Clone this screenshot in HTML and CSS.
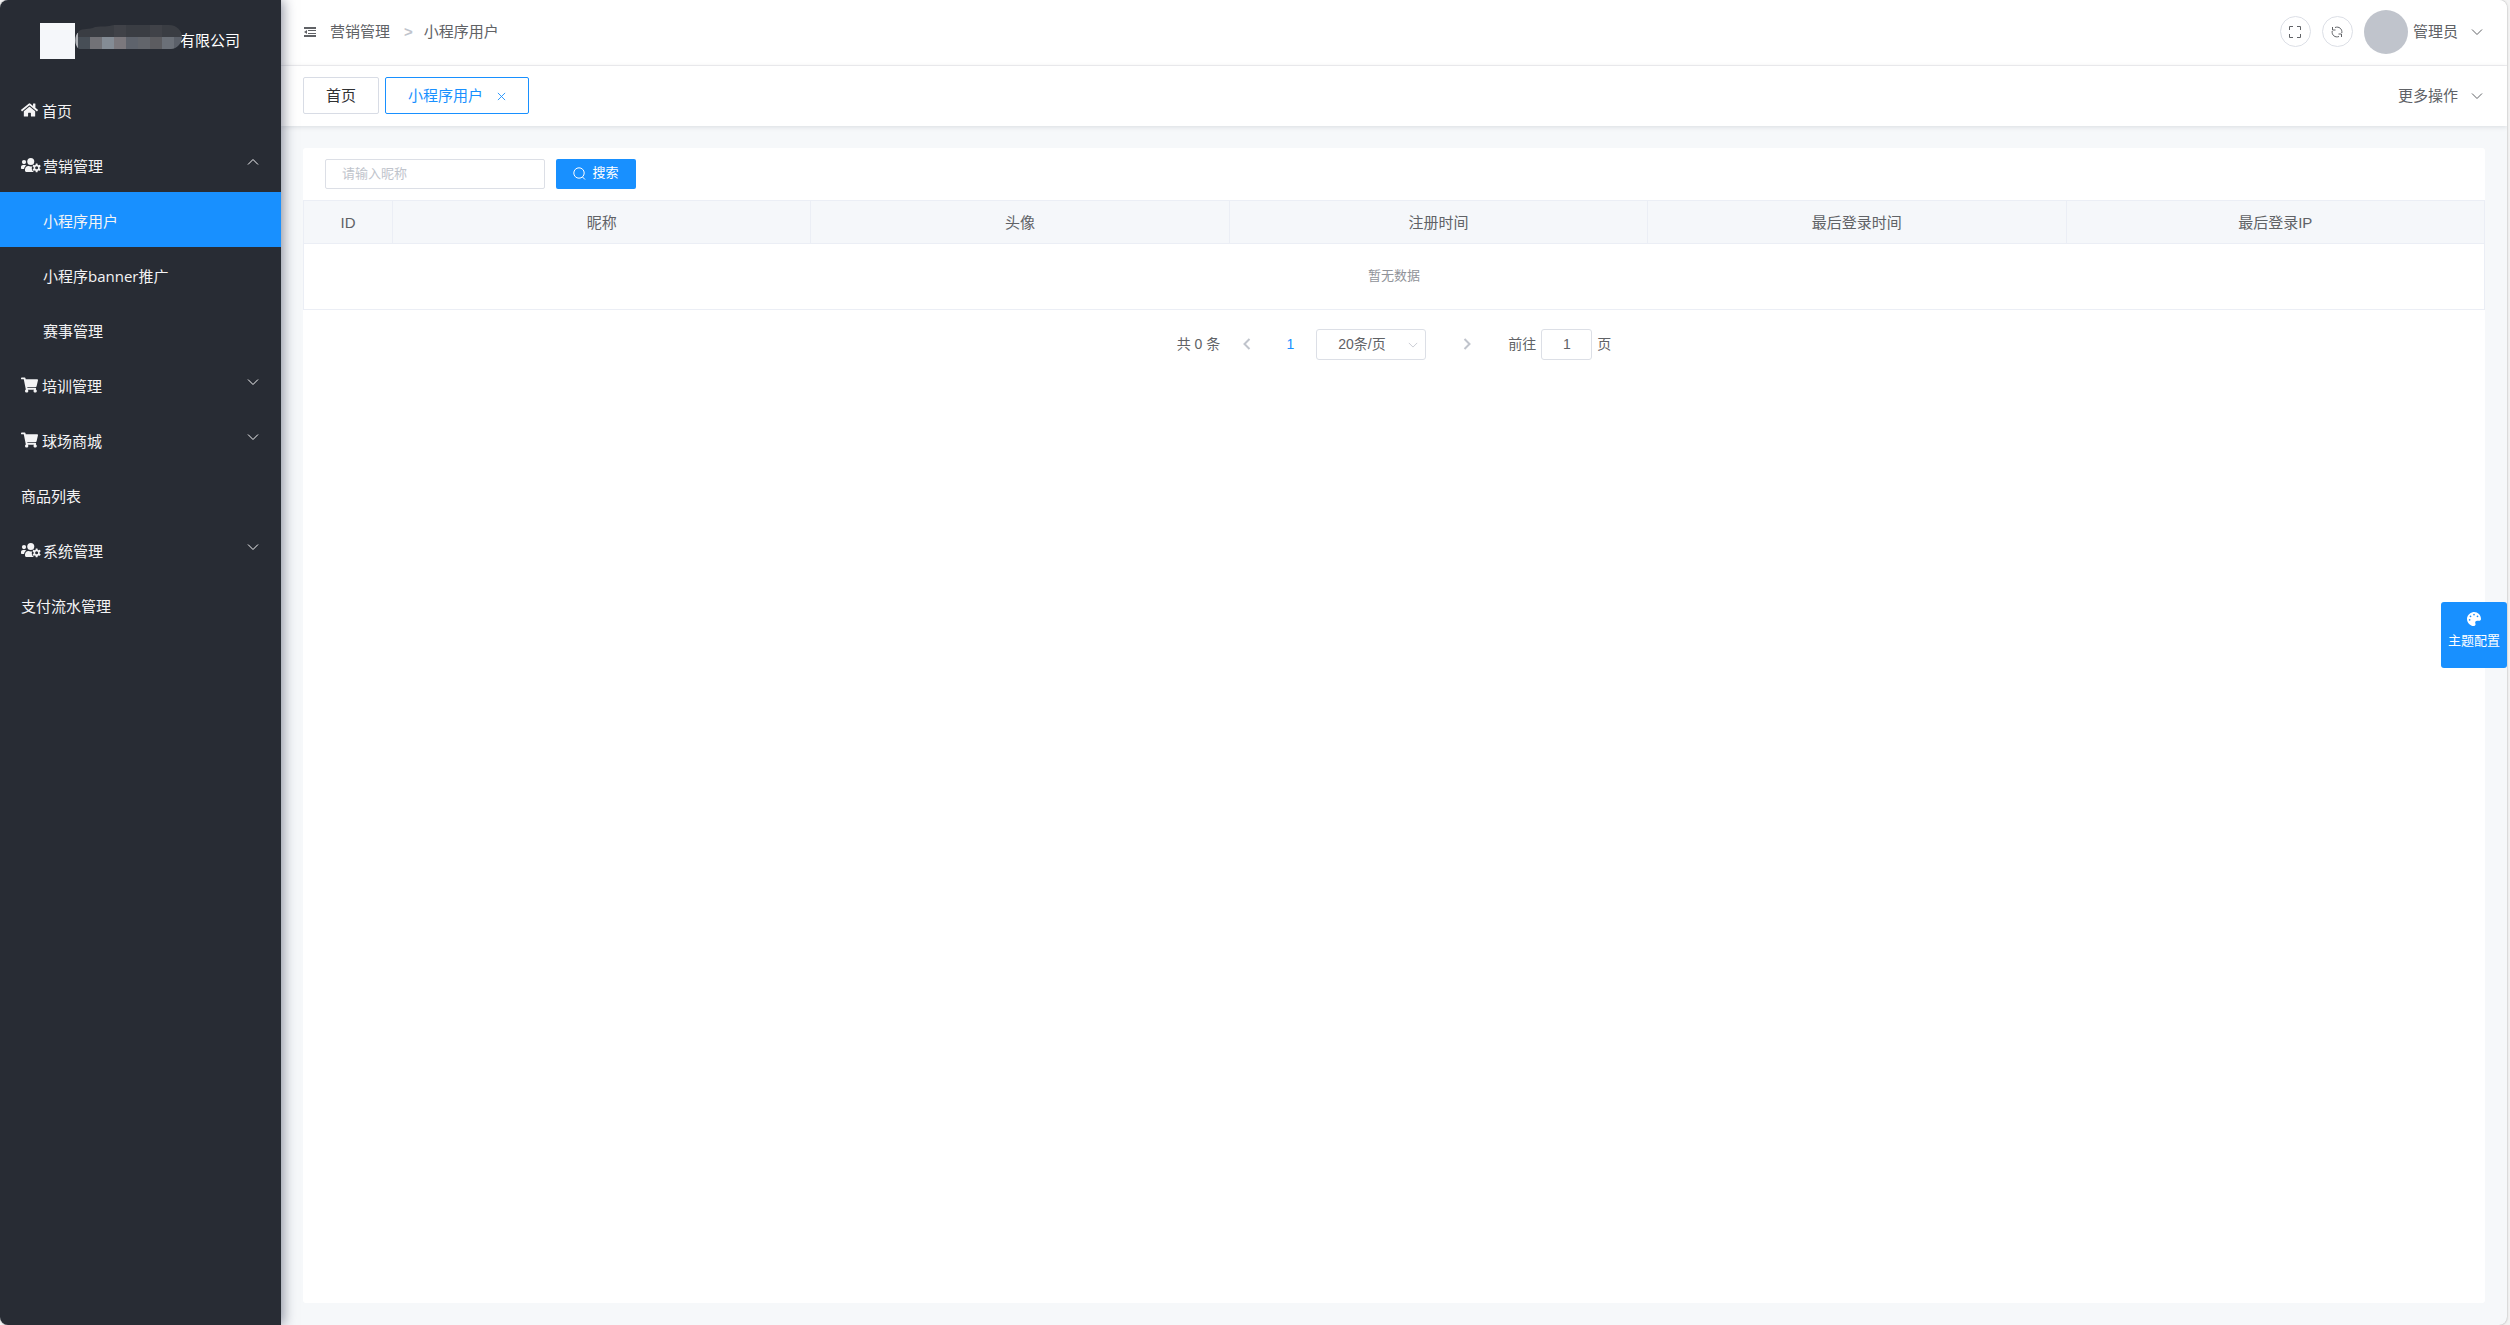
FILE: index.html
```html
<!DOCTYPE html>
<html lang="zh-CN">
<head>
<meta charset="utf-8">
<title>小程序用户</title>
<link rel="stylesheet" href="styles.css">
</head>
<body>
<svg class="sprite" aria-hidden="true">
  <symbol id="home" viewBox="0 0 576 512"><path d="M280.37 148.26L96 300.11V464a16 16 0 0 0 16 16l112.06-.29a16 16 0 0 0 15.92-16V368a16 16 0 0 1 16-16h64a16 16 0 0 1 16 16v95.64a16 16 0 0 0 16 16.05L464 480a16 16 0 0 0 16-16V300L295.67 148.26a12.19 12.19 0 0 0-15.3 0zM571.6 251.47L488 182.56V44.05a12 12 0 0 0-12-12h-56a12 12 0 0 0-12 12v72.61L318.47 43a48 48 0 0 0-61 0L4.34 251.47a12 12 0 0 0-1.6 16.9l25.5 31A12 12 0 0 0 45.15 301l235.22-193.74a12.19 12.19 0 0 1 15.3 0L530.9 301a12 12 0 0 0 16.9-1.6l25.5-31a12 12 0 0 0-1.7-16.93z"/></symbol>
  <symbol id="cart" viewBox="0 0 576 512"><path d="M528.12 301.319l47.273-208C578.806 78.301 567.391 64 551.99 64H159.208l-9.166-44.81C147.758 8.021 137.93 0 126.529 0H24C10.745 0 0 10.745 0 24v16c0 13.255 10.745 24 24 24h69.883l70.248 343.435C147.325 417.1 136 435.222 136 456c0 30.928 25.072 56 56 56s56-25.072 56-56c0-15.674-6.447-29.835-16.824-40h209.647C430.447 426.165 424 440.326 424 456c0 30.928 25.072 56 56 56s56-25.072 56-56c0-22.172-12.888-41.332-31.579-50.405l5.517-24.276c3.413-15.018-8.002-29.319-23.403-29.319H218.117l-6.545-32h293.145c11.206 0 20.92-7.754 23.403-18.681z"/></symbol>
  <symbol id="users" viewBox="0 0 640 512">
    <circle cx="96" cy="160" r="68"/><circle cx="312" cy="144" r="112"/>
    <path d="M64 256h64c18 0 34 7 45 19-40 22-68 61-74 109H32c-18 0-32-14-32-32v-32c0-35 29-64 64-64z"/>
    <path d="M235 288h9c40 18 88 20 118 4-18 30-22 62-16 92 6 38 30 70 64 92-6 3-12 4-18 4H176c-26 0-48-21-48-48v-29c0-64 48-115 107-115z"/>
    <path fill-rule="evenodd" d="M474 206h52l12 46 20 12 46-13 26 44-34 33v36l34 33-26 44-46-13-20 12-12 46h-52l-12-46-20-12-46 13-26-44 34-33v-36l-34-33 26-44 46 13 20-12zM500 298a48 48 0 1 0 0 96a48 48 0 0 0 0-96z"/>
  </symbol>
  <symbol id="palette" viewBox="0 0 512 512"><path d="M204.3 5C104.9 24.4 24.8 104.3 5.2 203.4c-37 187 131.7 326.4 258.8 306.7 41.2-6.4 61.4-54.6 42.5-91.7-23.1-45.4 9.9-98.4 60.9-98.4h79.7c35.8 0 64.8-29.6 64.9-65.3C511.5 97.1 368.1-26.9 204.3 5zM96 320c-17.7 0-32-14.3-32-32s14.3-32 32-32 32 14.3 32 32-14.3 32-32 32zm32-128c-17.7 0-32-14.3-32-32s14.3-32 32-32 32 14.3 32 32-14.3 32-32 32zm128-64c-17.7 0-32-14.3-32-32s14.3-32 32-32 32 14.3 32 32-14.3 32-32 32zm128 64c-17.7 0-32-14.3-32-32s14.3-32 32-32 32 14.3 32 32-14.3 32-32 32z"/></symbol>
  <symbol id="down" viewBox="0 0 12 12"><path class="line" d="M1 3.5l5 5 5-5"/></symbol>
  <symbol id="up" viewBox="0 0 12 12"><path class="line" d="M1 8.5l5-5 5 5"/></symbol>
  <symbol id="left" viewBox="0 0 12 12"><path class="bold" d="M8.500 1L3.500 6l5 5"/></symbol>
  <symbol id="right" viewBox="0 0 12 12"><path class="bold" d="M3.500 1l5 5-5 5"/></symbol>
</svg>
<div class="app">
  <aside class="sidebar">
    <div class="brand">
      <span class="logo"></span>
      <svg class="mosaic" width="107" height="24" viewBox="0 0 107 24" aria-hidden="true">
        <clipPath id="blob"><path d="M4 24C-1 20-1 11 4 6C8 3 14 5 20 2C28 1 32 2 39 0H94C102 0 107 6 107 12S102 24 96 24z"/></clipPath>
        <g clip-path="url(#blob)">
          <path fill="#3a3d43" d="M0 0h107v12H0z"/><path fill="#404248" d="M39 0h12v12H39zM75 0h12v12H75z"/>
          <path fill="#aeb1b6" d="M0 8h3v16H0z"/><path fill="#474e56" d="M3 12h12v12H3z"/><path fill="#727277" d="M15 12h12v12H15z"/><path fill="#848c95" d="M27 12h12v12H27z"/><path fill="#7b787d" d="M39 12h12v12H39z"/><path fill="#5e636c" d="M51 12h12v12H51z"/><path fill="#62656b" d="M63 12h12v12H63z"/><path fill="#5c5c60" d="M75 12h12v12H75z"/><path fill="#6b7078" d="M87 12h12v12H87z"/><path fill="#5b6069" d="M99 12h8v12H99z"/>
        </g>
      </svg>
      <span class="company">有限公司</span>
    </div>
    <nav class="menu">
      <a href="#"><svg class="ic-menu"><use href="#home"/></svg>首页</a>
      <a href="#"><svg class="ic-users"><use href="#users"/></svg>营销管理<svg class="arrow"><use href="#up"/></svg></a>
      <a class="sub active" href="#">小程序用户</a>
      <a class="sub" href="#">小程序banner推广</a>
      <a class="sub" href="#">赛事管理</a>
      <a href="#"><svg class="ic-menu"><use href="#cart"/></svg>培训管理<svg class="arrow"><use href="#down"/></svg></a>
      <a href="#"><svg class="ic-menu"><use href="#cart"/></svg>球场商城<svg class="arrow"><use href="#down"/></svg></a>
      <a href="#">商品列表</a>
      <a href="#"><svg class="ic-users"><use href="#users"/></svg>系统管理<svg class="arrow"><use href="#down"/></svg></a>
      <a href="#">支付流水管理</a>
    </nav>
  </aside>
  <div class="page">
    <header class="topbar">
      <button class="fold" aria-label="折叠菜单"><svg width="12" height="12" viewBox="0 0 12 12"><path d="M0 1h12v2H0zM4 4h8v1H4zM4 7h8v1H4zM0 9h12v2H0zM0 6l3-2v4z"/></svg></button>
      <nav class="crumbs"><a href="#">营销管理</a><span class="sep">&gt;</span><a href="#">小程序用户</a></nav>
      <div class="tools">
        <button class="round" aria-label="全屏"><svg width="12" height="12" viewBox="0 0 12 12"><path class="line" d="M.5 4V.5H4M8 .5h3.500V4M11.500 8v3.500H8M4 11.500H.5V8"/></svg></button>
        <button class="round" aria-label="刷新"><svg width="12" height="12" viewBox="0 0 12 12"><path class="line" d="M1.500 1v3h3M4 1.500C8 0 11.500 3 10.800 7M10.500 11V8h-3M8 10.500C4 12 .5 9 1.200 5"/></svg></button>
        <button class="user"><span class="avatar"></span>管理员<svg class="caret"><use href="#down"/></svg></button>
      </div>
    </header>
    <div class="tabs">
      <a class="tab" href="#">首页</a>
      <a class="tab current" href="#">小程序用户<svg width="9" height="9" viewBox="0 0 10 10"><path class="line" d="M1 1l8 8M9 1L1 9"/></svg></a>
      <button class="more">更多操作<svg class="caret"><use href="#down"/></svg></button>
    </div>
    <main class="content">
      <section class="card">
        <form class="search">
          <input type="text" placeholder="请输入昵称" aria-label="昵称">
          <button type="button"><svg width="13" height="13" viewBox="0 0 13 13"><circle class="line" cx="6" cy="6" r="5.200"/><path class="line" d="M9.500 10l2.500 2.500"/></svg>搜索</button>
        </form>
        <table>
          <colgroup><col class="col-id"><col><col><col><col><col></colgroup>
          <thead><tr><th>ID</th><th>昵称</th><th>头像</th><th>注册时间</th><th>最后登录时间</th><th>最后登录IP</th></tr></thead>
          <tbody><tr><td colspan="6">暂无数据</td></tr></tbody>
        </table>
        <div class="pager">
          <span>共 0 条</span>
          <button class="step" aria-label="上一页" disabled><svg><use href="#left"/></svg></button>
          <a class="num" href="#">1</a>
          <span class="sizes"><select aria-label="每页条数"><option>20条/页</option></select><svg><use href="#down"/></svg></span>
          <button class="step next" aria-label="下一页" disabled><svg><use href="#right"/></svg></button>
          <label class="jump">前往<input type="text" value="1">页</label>
        </div>
      </section>
    </main>
  </div>
  <button class="theme"><svg width="14" height="14"><use href="#palette"/></svg>主题配置</button>
</div>
</body>
</html>
```
FILE: styles.css
```css
* { box-sizing: border-box; }
html, body { height: 100%; }
body {
  margin: 0;
  padding-right: 3px;
  background: #f3f3f3;
  color: #606266;
  font: 15px/20px "Liberation Sans", "Noto Sans CJK SC", sans-serif;
}
a { color: inherit; text-decoration: none; }
button, input, select { font: inherit; color: inherit; }
button { padding: 0; border: 0; background: none; cursor: pointer; }
svg { fill: currentColor; flex: none; }
.sprite { position: absolute; width: 0; height: 0; }
.line { fill: none; stroke: currentColor; stroke-width: 1; }
.bold { fill: none; stroke: currentColor; stroke-width: 2; }

.app {
  position: relative;
  display: flex;
  min-height: 100%;
  overflow: hidden;
  border-radius: 8px;
  background: #f6f8fa;
  box-shadow: 0 0 2px #999;
}

.sidebar {
  position: relative;
  z-index: 1;
  flex: none;
  width: 281px;
  background: #282c34;
  color: #f4f4f5;
  box-shadow: 2px 0 12px rgba(29, 35, 65, .5);
}
.brand { display: flex; align-items: center; height: 82px; padding-left: 40px; color: #fff; }
.logo { width: 35px; height: 36px; background: #f5f7fa; }
.mosaic { position: relative; margin-top: -8px; }
.company { margin-left: -2px; }
.menu a {
  display: flex;
  align-items: center;
  height: 55px;
  padding: 2px 22px 0 21px;
  font-family: "Open Sans", "Noto Sans CJK SC", sans-serif;
}
.menu .sub { padding-left: 43px; }
.menu .active { background: #1890ff; }
.ic-menu { width: 17px; height: 16px; margin: 0 4px 2px 0; }
.ic-users { width: 20px; height: 16px; margin: 0 2px 2px 0; }
.arrow { width: 12px; height: 12px; margin: 0 0 8px auto; }

.page { display: flex; flex: 1; flex-direction: column; min-width: 0; }
.topbar {
  display: flex;
  align-items: center;
  height: 66px;
  padding: 0 24px 2px 23px;
  border-bottom: 1px solid #f0f0f2;
  background: #fff;
}
.fold { display: flex; margin-right: 14px; }
.crumbs { display: flex; flex: 1; }
.sep { margin: 0 11px 0 14px; color: #c0c4cc; font-weight: bold; }
.tools { display: flex; align-items: center; gap: 11px; }
.round {
  display: grid;
  place-items: center;
  width: 31px;
  height: 31px;
  border: 1px solid #dcdfe6;
  border-radius: 50%;
}
.user, .more { display: flex; align-items: center; }
.avatar { width: 44px; height: 44px; margin-right: 5px; border-radius: 50%; background: #c0c4cc; }
.caret { width: 12px; height: 12px; margin-left: 13px; }

.tabs {
  display: flex;
  align-items: center;
  gap: 6px;
  height: 60px;
  padding: 0 24px 1px 22px;
  background: #fff;
  box-shadow: 0 1px 5px rgba(0, 21, 41, .12);
}
.tab {
  display: flex;
  align-items: center;
  height: 37px;
  padding: 0 22px;
  border: 1px solid #d8dce5;
  border-radius: 2px;
  color: #303133;
}
.tab.current { border-color: #1890ff; color: #1890ff; }
.tab svg { margin: 2px 0 0 14px; }
.more { margin-left: auto; }

.content { display: flex; flex: 1; padding: 22px; }
.card { flex: 1; min-width: 0; border-radius: 3px; background: #fff; }
.search { display: flex; gap: 11px; padding: 11px 22px; }
.search input {
  width: 220px;
  height: 30px;
  padding: 0 16px 2px;
  border: 1px solid #dcdfe6;
  border-radius: 2px;
  font-size: 13px;
}
.search input::placeholder { color: #c0c4cc; }
.search button {
  display: flex;
  align-items: center;
  justify-content: center;
  gap: 6px;
  width: 80px;
  height: 30px;
  padding-bottom: 2px;
  border-radius: 2px;
  background: #1890ff;
  color: #fff;
  font-size: 13px;
}
table { width: 100%; border-collapse: collapse; table-layout: fixed; }
.col-id { width: 89px; }
th, td { padding: 0; border: 1px solid #ebeef5; text-align: center; }
th { height: 43px; padding-top: 2px; background: #f5f7fa; font-weight: normal; }
td { height: 66px; padding-bottom: 2px; color: #909399; font-size: 13px; }

.pager { display: flex; align-items: center; justify-content: center; height: 68px; font-size: 14px; }
.step { display: grid; place-items: center; width: 34px; height: 31px; margin-left: 10px; color: #c0c4cc; }
.step svg { width: 12px; height: 12px; }
.num { width: 34px; margin: 0 9px; color: #1890ff; text-align: center; }
.sizes { position: relative; }
.sizes select {
  width: 110px;
  height: 31px;
  padding: 0 21px;
  border: 1px solid #dcdfe6;
  border-radius: 3px;
  background: #fff;
  appearance: none;
}
.sizes svg { position: absolute; top: 11px; right: 8px; width: 10px; height: 10px; color: #c0c4cc; }
.next { margin: 0 24px; }
.jump { display: flex; align-items: center; gap: 5px; }
.jump input {
  width: 51px;
  height: 31px;
  padding: 0;
  border: 1px solid #dcdfe6;
  border-radius: 3px;
  text-align: center;
}

.theme {
  position: fixed;
  z-index: 2;
  top: calc(50% - 61px);
  right: 3px;
  display: flex;
  flex-direction: column;
  align-items: center;
  justify-content: center;
  gap: 5px;
  width: 66px;
  height: 66px;
  padding-bottom: 6px;
  border-radius: 3px;
  background: #1890ff;
  color: #fff;
  font-size: 13px;
}
```
